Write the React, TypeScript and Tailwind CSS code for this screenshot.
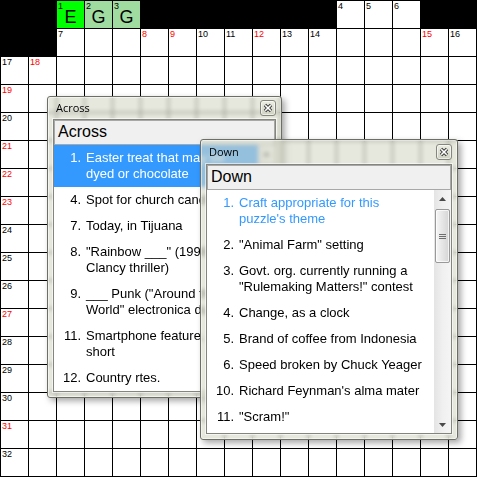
import clsx from "clsx";

type Clue = { n: number; text: string };

const ACROSS: Clue[] = [
  { n: 1, text: "Easter treat that may be dyed or chocolate" },
  { n: 4, text: "Spot for church candles" },
  { n: 7, text: "Today, in Tijuana" },
  { n: 8, text: '"Rainbow ___" (1998 Tom Clancy thriller)' },
  { n: 9, text: '___ Punk ("Around the World" electronica duo)' },
  { n: 11, text: "Smartphone feature, for short" },
  { n: 12, text: "Country rtes." },
];

const DOWN: Clue[] = [
  { n: 1, text: "Craft appropriate for this puzzle's theme" },
  { n: 2, text: '"Animal Farm" setting' },
  { n: 3, text: 'Govt. org. currently running a "Rulemaking Matters!" contest' },
  { n: 4, text: "Change, as a clock" },
  { n: 5, text: "Brand of coffee from Indonesia" },
  { n: 6, text: "Speed broken by Chuck Yeager" },
  { n: 10, text: "Richard Feynman's alma mater" },
  { n: 11, text: '"Scram!"' },
];

const NUMS: Record<string, { n: number; red?: boolean }> = {
  "0,2": { n: 1 },
  "0,3": { n: 2 },
  "0,4": { n: 3 },
  "0,12": { n: 4 },
  "0,13": { n: 5 },
  "0,14": { n: 6 },
  "1,2": { n: 7 },
  "1,5": { n: 8, red: true },
  "1,6": { n: 9, red: true },
  "1,7": { n: 10 },
  "1,8": { n: 11 },
  "1,9": { n: 12, red: true },
  "1,10": { n: 13 },
  "1,11": { n: 14 },
  "1,15": { n: 15, red: true },
  "1,16": { n: 16 },
  "2,0": { n: 17 },
  "2,1": { n: 18, red: true },
  "3,0": { n: 19, red: true },
  "4,0": { n: 20 },
  "5,0": { n: 21, red: true },
  "6,0": { n: 22, red: true },
  "7,0": { n: 23, red: true },
  "8,0": { n: 24 },
  "9,0": { n: 25 },
  "10,0": { n: 26 },
  "11,0": { n: 27, red: true },
  "12,0": { n: 28 },
  "13,0": { n: 29 },
  "14,0": { n: 30 },
  "15,0": { n: 31, red: true },
  "16,0": { n: 32 },
};

const FILLS: Record<string, { ch: string; bg: string }> = {
  "0,2": { ch: "E", bg: "bg-[#00ff00]" },
  "0,3": { ch: "G", bg: "bg-[#a0dca0]" },
  "0,4": { ch: "G", bg: "bg-[#a0dca0]" },
};

const isBlack = (r: number, c: number) =>
  (r === 0 && ![2, 3, 4, 12, 13, 14].includes(c)) || (r === 1 && c < 2);

function Cell({ r, c }: { r: number; c: number }) {
  if (isBlack(r, c)) return <div className="bg-black" />;
  const key = `${r},${c}`;
  const num = NUMS[key];
  const fill = FILLS[key];
  return (
    <div className={clsx("relative flex items-end justify-center pb-[2px]", fill ? fill.bg : "bg-white")}>
      {num && (
        <span
          className={clsx(
            "absolute left-[1px] top-[1px] text-[9px] leading-none",
            num.red ? "text-[#ff0000]" : "text-black"
          )}
        >
          {num.n}
        </span>
      )}
      {fill && <span className="text-[18px] leading-none text-black">{fill.ch}</span>}
    </div>
  );
}

function Arrow({ up }: { up?: boolean }) {
  return (
    <div className="h-[17px] flex items-center justify-center">
      <svg width="7" height="4" viewBox="0 0 7 4">
        <path d={up ? "M0 4 L3.5 0 L7 4Z" : "M0 0 L3.5 4 L7 0Z"} fill="#4a4a4a" />
      </svg>
    </div>
  );
}

function Scrollbar() {
  return (
    <div className="w-[17px] shrink-0 flex flex-col bg-linear-to-r from-[#e4e4e4] via-[#f0f0f0] to-[#f5f5f5]">
      <Arrow up />
      <div className="h-[2px]" />
      <div className="h-[54px] mx-[1px] rounded-[2px] border border-[#999999] bg-linear-to-r from-[#f6f6f6] to-[#d5d5d5] shadow-[inset_0_0_0_1px_rgba(255,255,255,0.7)] flex flex-col items-center justify-center gap-[1px] pt-[1px]">
        <div className="w-[7px] h-[1px] bg-[#6e6e6e]" />
        <div className="w-[7px] h-[1px] bg-[#6e6e6e]" />
        <div className="w-[7px] h-[1px] bg-[#6e6e6e]" />
      </div>
      <div className="flex-1" />
      <Arrow />
    </div>
  );
}

function CloseButton() {
  return (
    <div className="w-[16px] h-[16px] rounded-[3px] border border-[#85877d] bg-linear-to-b from-[#eceee4] to-[#cfd1c3] shadow-[inset_0_0_0_1px_rgba(255,255,255,0.6)] flex items-center justify-center">
      <svg width="10" height="10" viewBox="0 0 10 10">
        <path d="M2 2 L8 8 M8 2 L2 8" stroke="#3c3c3c" strokeWidth="3.4" />
        <path d="M2.2 2.2 L7.8 7.8 M7.8 2.2 L2.2 7.8" stroke="#ffffff" strokeWidth="1.6" />
      </svg>
    </div>
  );
}

function ClueList({
  clues,
  textW,
  selected,
  current,
}: {
  clues: Clue[];
  textW: string;
  selected?: number;
  current?: number;
}) {
  return (
    <div className="flex-1 min-w-0 overflow-hidden">
      {clues.map((c) => (
        <div
          key={c.n}
          className={clsx(
            "flex py-[5px] text-[13px] leading-[16px]",
            c.n === selected && "bg-[#3399ff] text-white",
            c.n === current && "text-[#3399ff]",
            c.n !== selected && c.n !== current && "text-black"
          )}
        >
          <span className="w-[27px] shrink-0 text-right">{c.n}.</span>
          <span className={clsx("ml-[5px] shrink-0", textW)}>{c.text}</span>
        </div>
      ))}
    </div>
  );
}

function ClueWindow({
  pos,
  titleH,
  title,
  children,
}: {
  pos: string;
  titleH: string;
  title: string;
  children: React.ReactNode;
}) {
  return (
    <div
      className={clsx(
        "absolute flex flex-col rounded-[3px] border border-[#6d6f66] bg-[#d6d8c6]/60 backdrop-blur-[2px] shadow-[inset_0_0_0_1px_rgba(255,255,255,0.5),3px_3px_6px_rgba(0,0,0,0.35)]",
        pos
      )}
    >
      <div className={clsx("shrink-0 flex items-center justify-between pl-[8px] pr-[5px]", titleH)}>
        <span className="text-[11px] text-black font-['Open_Sans',sans-serif]">{title}</span>
        <CloseButton />
      </div>
      <div className="mx-[5px] mb-[5px] flex-1 min-h-0 flex flex-col bg-white border border-[#84867d] shadow-[0_0_0_1px_rgba(255,255,255,0.6)]">
        <div className="h-[25px] shrink-0 flex items-center pl-[3px] pb-[1px] bg-[#f0f0f0] border border-[#a8a8a8] text-[16px] text-black">
          {title}
        </div>
        <div className="flex-1 min-h-0 flex">{children}</div>
      </div>
    </div>
  );
}

export default function App() {
  const rows = Array.from({ length: 17 }, (_, i) => i);
  return (
    <div className="relative w-[477px] h-[477px] overflow-hidden bg-white font-['Liberation_Sans',Arial,sans-serif]">
      <div className="grid grid-cols-[repeat(17,27px)] auto-rows-[27px] gap-px p-px bg-black w-[477px] h-[477px]">
        {rows.map((r) => rows.map((c) => <Cell key={`${r}-${c}`} r={r} c={c} />))}
      </div>

      <ClueWindow pos="left-[47px] top-[96px] w-[235px] h-[302px]" titleH="h-[22px]" title="Across">
        <ClueList clues={ACROSS} textW="w-[160px]" selected={1} />
        <Scrollbar />
      </ClueWindow>

      <ClueWindow pos="left-[200px] top-[139px] w-[258px] h-[301px]" titleH="h-[24px]" title="Down">
        <ClueList clues={DOWN} textW="w-[187px]" current={1} />
        <Scrollbar />
      </ClueWindow>
    </div>
  );
}
